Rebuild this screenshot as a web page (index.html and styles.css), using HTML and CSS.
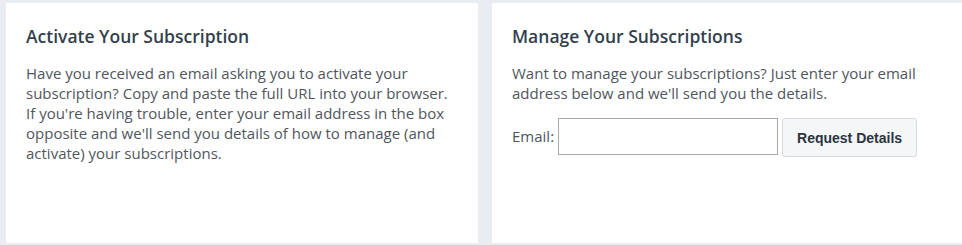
FILE: index.html
```html
<!DOCTYPE html>
<html lang="en">
<head>
<meta charset="utf-8">
<title>Subscriptions</title>
<link rel="stylesheet" href="styles.css">
</head>
<body>
<div class="page">
  <section class="card">
    <h2 class="card-title">Activate Your Subscription</h2>
    <p class="card-text">Have you received an email asking you to activate your subscription? Copy and paste the full URL into your browser. If you're having trouble, enter your email address in the box opposite and we'll send you details of how to manage (and activate) your subscriptions.</p>
  </section>
  <section class="card">
    <h2 class="card-title">Manage Your Subscriptions</h2>
    <p class="card-text">Want to manage your subscriptions? Just enter your email address below and we'll send you the details.</p>
    <form class="email-form">
      <label class="email-label" for="email">Email:</label>
      <input class="email-input" id="email" type="email">
      <button class="btn" type="button">Request Details</button>
    </form>
  </section>
</div>
</body>
</html>
```
FILE: styles.css
```css
html, body {
  margin: 0;
  padding: 0;
  background: #e9edf1;
}
body {
  font-family: "Open Sans", "Liberation Sans", sans-serif;
  color: #4a4f55;
}
.page {
  display: grid;
  grid-template-columns: 472px 1fr;
  column-gap: 14px;
  padding: 3px 0 2px 6px;
  height: 240px;
}
.card {
  background: #ffffff;
  padding: 21px 20px 20px 20px;
  box-sizing: border-box;
  height: 240px;
}
.card-title {
  margin: 0 0 15px 0;
  font-size: 17.5px;
  font-weight: 600;
  line-height: 24px;
  color: #333f4c;
}
.card-text {
  margin: 0;
  font-size: 15px;
  line-height: 20px;
  color: #50565d;
  max-width: 426px;
}
.email-form {
  display: flex;
  align-items: flex-start;
  margin-top: 15px;
}
.email-label {
  font-size: 15px;
  line-height: 20px;
  color: #50565d;
  margin-top: 8px;
  margin-right: 4px;
}
.email-input {
  width: 220px;
  height: 37px;
  box-sizing: border-box;
  border: 1px solid #a9a9a9;
  border-radius: 0;
  margin: 0;
  padding: 2px 6px;
  font-size: 14px;
}
.btn {
  margin-left: 4px;
  width: 135px;
  height: 39px;
  box-sizing: border-box;
  background: #f4f6f8;
  border: 1px solid #d6dbe0;
  border-radius: 3px;
  font-family: "Liberation Sans", Arial, sans-serif;
  font-weight: 700;
  font-size: 14px;
  color: #2b3440;
  padding: 0;
}
```
